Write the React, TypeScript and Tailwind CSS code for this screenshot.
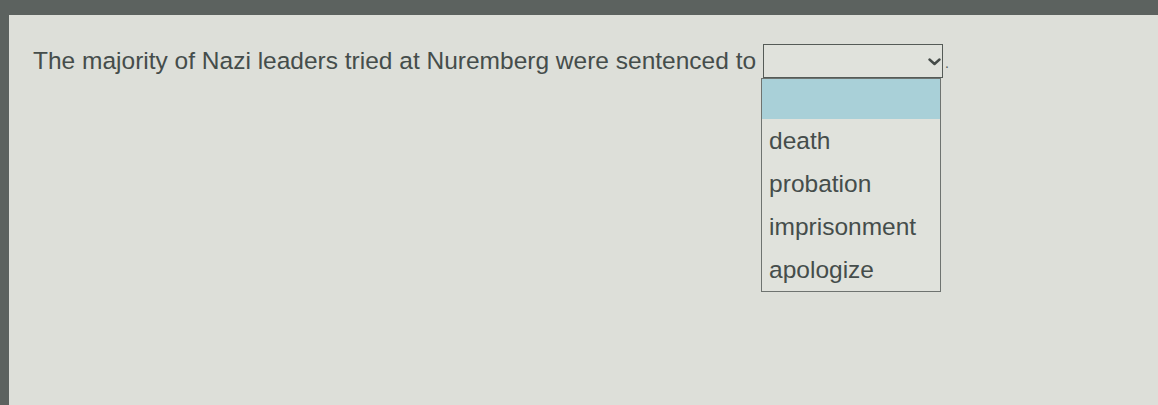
import React from "react";

const options = ["death", "probation", "imprisonment", "apologize"];

function Chevron() {
  return (
    <svg width="13" height="8" viewBox="0 0 13 8" fill="none">
      <path d="M1.5 1.5 L6.5 6 L11.5 1.5" stroke="#454b48" strokeWidth="2.4" strokeLinecap="round" strokeLinejoin="round" />
    </svg>
  );
}

export default function App() {
  return (
    <div className="w-[1158px] h-[405px] bg-[#5c625f] pt-[15px] pl-[9px] overflow-hidden" style={{ fontFamily: '"Liberation Sans", Arial, sans-serif' }}>
      <div className="h-full bg-[#dddfd9] pl-[24px] pt-[29px] text-[#454d4b]">
        <div className="flex items-start">
          <span className="text-[24.5px] leading-[28px] mt-[3px] whitespace-nowrap">
            The majority of Nazi leaders tried at Nuremberg were sentenced to
          </span>
          <div className="relative ml-[7px]">
            <div className="w-[180px] h-[34px] border border-[#555b57] bg-[#e0e2dc] flex items-center justify-end pr-[1px] pt-[1px]">
              <Chevron />
            </div>
            <div className="absolute left-[-2px] top-[34px] w-[180px] border border-[#6e7370] bg-[#e0e2dc]">
              <div className="h-[40px] bg-[#a9d0d8]" />
              {options.map((o) => (
                <div key={o} className="h-[43px] leading-[43px] pl-[7px] text-[24.5px] text-[#454d4b]">
                  {o}
                </div>
              ))}
            </div>
          </div>
          <span className="ml-[2px] mt-[12px] text-[14px] leading-[14px] text-[#555b57]">.</span>
        </div>
      </div>
    </div>
  );
}
